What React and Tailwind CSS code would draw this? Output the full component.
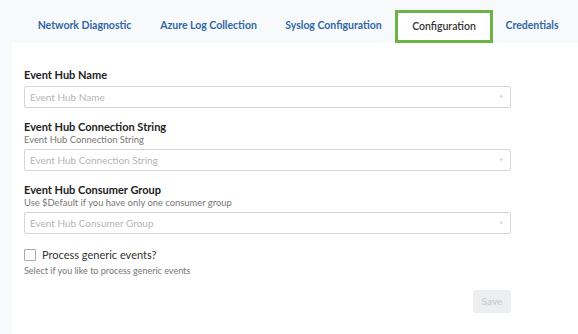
import React from 'react';

const tabs = [
    { label: 'Network Diagnostic', w: 'w-[121px]' },
    { label: 'Azure Log Collection', w: 'w-[127px]' },
    { label: 'Syslog Configuration', w: 'w-[123px]' },
    { label: 'Configuration', w: 'w-[98px]', active: true },
    { label: 'Credentials', w: 'w-[78px]' },
];

const Field = ({ label, hint, placeholder }) => (
    <div className="flex flex-col">
        <div className="text-[11px] leading-[14px] font-bold text-[#222]">{label}</div>
        {hint && <div className="text-[9.4px] leading-[10px] mt-[1px] text-[#777]">{hint}</div>}
        <div className="relative mt-[4px] h-[22px] w-[487px] border border-[#d6d6d6] rounded-[2px] bg-white flex items-center px-[5px]">
            <span className="text-[10px] text-[#b5b5b5]">{placeholder}</span>
            <span className="absolute right-[7px] top-[5px] text-[9px] text-[#c4c4c4]">*</span>
        </div>
    </div>
);

export default function App() {
    return (
        <div className="w-[578px] h-[334px] bg-[#f8f9fa] flex flex-col overflow-hidden" style={{ fontFamily: 'Lato, "Open Sans", sans-serif' }}>
            {/* tab strip */}
            <div className="flex pl-[24px] pt-[10px] h-[43px] shrink-0">
                {tabs.map((t) =>
                    t.active ? (
                        <div key={t.label} className={`${t.w} h-[33px] bg-white border-[3px] border-[#6ab344] flex items-center justify-center text-[10.5px] font-semibold text-[#333]`}>
                            {t.label}
                        </div>
                    ) : (
                        <div key={t.label} className={`${t.w} h-[31px] flex items-center justify-center text-[10.5px] font-bold text-[#2e67a8]`}>
                            {t.label}
                        </div>
                    )
                )}
            </div>

            {/* panel */}
            <div className="flex-1 ml-[12px] bg-white pl-[12px] pt-[25px] flex flex-col">
                <Field label="Event Hub Name" placeholder="Event Hub Name" />
                <div className="mt-[12px]">
                    <Field label="Event Hub Connection String" hint="Event Hub Connection String" placeholder="Event Hub Connection String" />
                </div>
                <div className="mt-[12px]">
                    <Field label="Event Hub Consumer Group" hint="Use $Default if you have only one consumer group" placeholder="Event Hub Consumer Group" />
                </div>

                <div className="mt-[14px] flex items-center gap-[6px]">
                    <div className="w-[12px] h-[12px] border border-[#aaa] rounded-[1px] bg-white" />
                    <span className="text-[11px] leading-[14px] text-[#333]">Process generic events?</span>
                </div>
                <div className="mt-[2px] text-[9px] text-[#777]">Select if you like to process generic events</div>

                <div className="w-[487px] flex justify-end mt-[12px]">
                    <div className="w-[38px] h-[23px] bg-[#eceef0] rounded-[2px] flex items-center justify-center text-[10px] font-bold text-[#cdd0d4]">Save</div>
                </div>
            </div>
        </div>
    );
}
